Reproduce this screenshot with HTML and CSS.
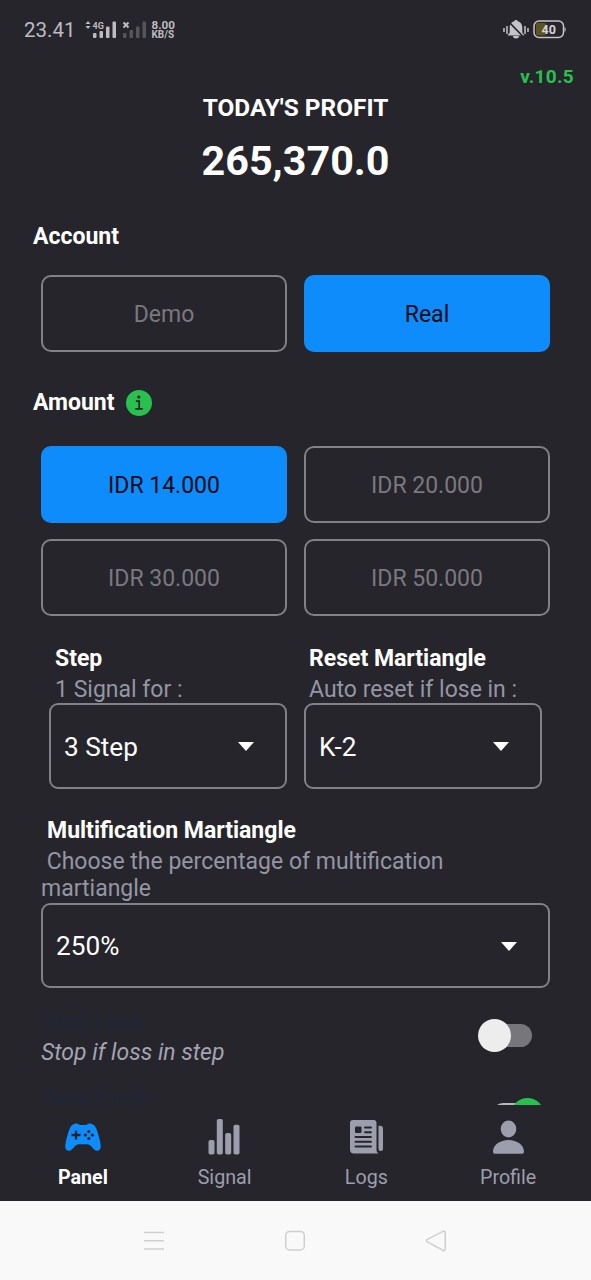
FILE: index.html
```html
<!DOCTYPE html>
<html lang="en">
<head>
<meta charset="utf-8">
<title>Panel</title>
<link rel="stylesheet" href="styles.css">
</head>
<body>
<div class="phone">
  <header class="status">
    <span class="clock">23.41</span>
    <svg class="signals" width="66" height="20" viewBox="0 0 66 20" fill="#bdbcc1">
      <path d="M2.500 4l2.500-3 2.500 3zM2.500 6h5l-2.500 3z" transform="translate(-1 0)"/>
      <g><rect x="9" y="13" width="3.500" height="5" rx="1"/><rect x="15.500" y="11" width="3.500" height="7" rx="1"/><rect x="22" y="6.500" width="3.500" height="11.500" rx="1"/><rect x="28.500" y="1.500" width="3.500" height="16.500" rx="1"/></g>
      <text x="8.500" y="8.500" class="net">4G</text>
      <path d="M39.500 2.500l5 5M44.500 2.500l-5 5" stroke="#bdbcc1" stroke-width="2"/>
      <g fill="#56555b"><rect x="39" y="13" width="3.500" height="5" rx="1"/><rect x="45.500" y="10" width="3.500" height="8" rx="1"/><rect x="52" y="6.500" width="3.500" height="11.500" rx="1"/><rect x="58.500" y="1.500" width="3.500" height="16.500" rx="1"/></g>
    </svg>
    <span class="speed"><span>8.00</span><span class="unit">KB/S</span></span>
    <svg class="mute" width="26" height="22" viewBox="0 0 26 22" fill="#c4c3c7">
      <path d="M13 1c.9 0 1.500.5 1.700 1.200 3 .7 4.600 3 4.600 6.300v5l2.200 3H4.500l2.200-3v-5c0-3.300 1.600-5.600 4.600-6.300.2-.7.800-1.200 1.700-1.200zM10 17h6a3 2.500 0 0 1-6 0z"/>
      <path d="M1 9v4M4 7v8M22 7v8M25 9v4" stroke="#c4c3c7" stroke-width="1.500"/>
      <path d="M5.500 2.500l15.500 16" stroke="#26252b" stroke-width="1.700"/>
    </svg>
    <svg class="battery" width="34" height="20" viewBox="0 0 34 20">
      <rect x="3" y="3" width="10" height="12.500" rx="2" fill="#5d5420"/>
      <rect x="1" y="1" width="29.500" height="16.500" rx="5" fill="none" stroke="#c4c3c7" stroke-width="1.500"/>
      <path d="M31.500 7c1.700.8 1.700 4 0 5z" fill="#c4c3c7"/>
      <text x="15.700" y="13.700" text-anchor="middle" class="level">40</text>
    </svg>
  </header>

  <main class="panel">
    <div class="version">v.10.5</div>
    <h1 class="title">TODAY'S PROFIT</h1>
    <div class="profit">265,370.0</div>

    <h2 class="label account">Account</h2>
    <div class="options">
      <button class="option">Demo</button>
      <button class="option on">Real</button>
    </div>

    <h2 class="label amount">Amount
      <svg class="info" width="26" height="26" viewBox="0 0 26 26">
        <circle cx="13" cy="13" r="13" fill="#28c150"/>
        <circle cx="12.800" cy="7" r="1.600" fill="#26252b"/>
        <path d="M9.800 11.200h3.400v7.500M9.300 18.800h7.500" fill="none" stroke="#26252b" stroke-width="1.800"/>
      </svg>
    </h2>
    <div class="options amounts">
      <button class="option on">IDR 14.000</button>
      <button class="option">IDR 20.000</button>
      <button class="option">IDR 30.000</button>
      <button class="option">IDR 50.000</button>
    </div>

    <div class="selects">
      <section>
        <h2 class="label">Step</h2>
        <p class="hint">1 Signal for :</p>
        <div class="select"><span>3 Step</span><i class="caret"></i></div>
      </section>
      <section>
        <h2 class="label">Reset Martiangle</h2>
        <p class="hint">Auto reset if lose in :</p>
        <div class="select"><span>K-2</span><i class="caret"></i></div>
      </section>
    </div>

    <section class="multi">
      <h2 class="label">Multification Martiangle</h2>
      <p class="hint">&nbsp;Choose the percentage of multification martiangle</p>
      <div class="select"><span>250%</span><i class="caret"></i></div>
    </section>

    <div class="rule">
      <div><h2 class="ghost">Stop Loss</h2><p class="desc">Stop if loss in step</p></div>
      <span class="switch"><i class="thumb"></i></span>
    </div>
    <div class="rule">
      <div><h2 class="ghost">Take Profit</h2></div>
      <span class="switch checked"><i class="thumb"></i></span>
    </div>
  </main>

  <nav class="tabs">
    <a class="tab active">
      <svg width="36" height="36" viewBox="0 0 36 36">
        <path fill="#0e8cfb" d="M8.500 5.200C10 4.500 11.800 4.300 13 5c1.200.8 2 1.100 3.200 1.100h3.600c1.200 0 2-.3 3.200-1.100 1.200-.7 3-.5 4.500.2 2 .9 3.200 2.500 4.200 5.300 1.800 5 3.500 11.500 4 15.500.4 3.300-.6 5.400-2.800 5.700-2.600.4-4.500-1.500-6.300-3.900-1.400-1.800-2.500-2.600-4.600-2.600h-8c-2.100 0-3.200.8-4.600 2.600-1.800 2.400-3.700 4.300-6.300 3.900C.9 31.400-.1 29.300.3 26c.5-4 2.200-10.500 4-15.500 1-2.800 2.200-4.400 4.200-5.300z"/>
        <path d="M11 11.500v9M6.500 16h9" stroke="#26252b" stroke-width="2.300"/>
        <g fill="#26252b"><circle cx="23.800" cy="12.500" r="1.600"/><circle cx="23.800" cy="19.500" r="1.600"/><circle cx="20.300" cy="16" r="1.600"/><circle cx="27.300" cy="16" r="1.600"/></g>
      </svg>
      <span>Panel</span>
    </a>
    <a class="tab">
      <svg width="36" height="36" viewBox="0 0 36 36" fill="#9c9eae"><rect x="1.500" y="21" width="6" height="14.500" rx="1.800"/><rect x="9.800" y="0" width="6" height="35.500" rx="1.800"/><rect x="18.200" y="14" width="6" height="21.500" rx="1.800"/><rect x="26.500" y="5.700" width="6" height="29.800" rx="1.800"/></svg>
      <span>Signal</span>
    </a>
    <a class="tab">
      <svg width="36" height="36" viewBox="0 0 36 36" fill="#9c9eae">
        <path d="M5 1h20.500a3 3 0 0 1 3 3v27c0 1.400.8 2.500 2 3.500H6a4 4 0 0 1-4-4V4a3 3 0 0 1 3-3z"/>
        <path d="M30.500 6.700h1.500a3 3 0 0 1 3 3v20a2.200 2.200 0 0 1-4.500 0z"/>
        <rect x="7" y="7.500" width="6.500" height="6.500" rx="1" fill="#26252b"/>
        <path d="M17 8.500h6M17 13.300h6M7.500 18h15.500M7.500 22.700h15.500M7.500 27.500h15.500" stroke="#26252b" stroke-width="1.900" stroke-linecap="round"/>
      </svg>
      <span>Logs</span>
    </a>
    <a class="tab">
      <svg width="36" height="36" viewBox="0 0 36 36" fill="#9c9eae"><ellipse cx="18.500" cy="10" rx="7.800" ry="8.500"/><path d="M18.500 21c8.500 0 15.500 5 15.500 11.500 0 1.500-.8 2.300-2.300 2.300H5.300c-1.500 0-2.300-.8-2.300-2.300C3 26 10 21 18.500 21z"/></svg>
      <span>Profile</span>
    </a>
  </nav>

  <footer class="system">
    <svg width="22" height="22" viewBox="0 0 22 22"><path d="M1 2.500h20M1 10.700h20M1 19h20"/></svg>
    <svg width="22" height="22" viewBox="0 0 22 22"><rect x="1.700" y="1.400" width="18.600" height="18.600" rx="4"/></svg>
    <svg width="22" height="22" viewBox="0 0 22 22"><path d="M18.500 1.200L2.300 9.400q-1.800 1.200 0 2.400l16.200 8.700q1.700.6 1.700-1.400V2.500q0-1.900-1.700-1.300z"/></svg>
  </footer>
</div>
</body>
</html>
```

FILE: styles.css
```css
* { box-sizing: border-box; margin: 0; padding: 0; }
body { font-family: Roboto, sans-serif; background: #26252b; color: #fff; }
.phone { width: 591px; height: 1280px; display: flex; flex-direction: column; overflow: hidden; }

.status { flex: none; height: 60px; padding: 0 24px; display: flex; align-items: center; color: #bdbcc1; }
.clock { font-size: 20.5px; line-height: 24px; }
.signals { margin: 0 0 0 8px; }
.net { font: 700 9px Roboto, sans-serif; }
.speed { display: flex; flex-direction: column; width: 26px; margin-left: 2px; font-size: 11.7px; line-height: 9.5px; font-weight: 700; }
.unit { font-size: 10px; }
.mute { margin-left: auto; }
.battery { margin: 0 0 0 4px; }
.level { font: 700 12.5px Roboto, sans-serif; fill: #d5d4d6; }

.panel { flex: none; height: 1045px; padding: 5px 41px 0; overflow: hidden; }
.version { height: 24px; margin-right: -24px; text-align: right; font-size: 19px; line-height: 24px; font-weight: 700; letter-spacing: .3px; color: #28c150; }
.title { margin-top: 4px; text-align: center; font-size: 24.4px; line-height: 29px; font-weight: 700; }
.profit { margin-top: 15px; text-align: center; font-size: 41.3px; line-height: 49px; height: 48px; font-weight: 700; }

.label { font-size: 23px; line-height: 27px; font-weight: 700; }
.account { margin: 38px 0 25px -8px; }
.amount { display: flex; gap: 11px; margin: 37px 0 30px -8px; }
.info { margin-top: 1px; }

.options { display: grid; grid-template-columns: 246px 246px; gap: 17px; }
.amounts { row-gap: 16px; }
.option { height: 77px; padding-top: 2px; border: 2px solid #818187; border-radius: 10px; background: none; font: 400 23px Roboto, sans-serif; color: #79797f; }
.option.on { background: #0e8cfb; border-color: #0e8cfb; color: #0a0b12; }

.selects { display: grid; grid-template-columns: 238px 238px; gap: 17px; margin: 29px 0 0 8px; }
.selects .label, .selects .hint { padding-left: 6px; }
.selects section + section .label, .selects section + section .hint { padding-left: 5px; }
.hint { margin-top: 4px; font-size: 23px; line-height: 27px; color: #9496a5; }
.select { display: flex; align-items: center; justify-content: space-between; height: 86px; padding: 1px 31px 0 13px; border: 2px solid #818187; border-radius: 9px; font-size: 26.2px; }
.caret { border: 8px solid transparent; border-top: 9px solid #fff; border-bottom: 0; }
.multi { margin-top: 28px; }
.multi .label { padding-left: 6px; }
.multi .select { height: 85px; margin-top: 1px; }

.rule { display: flex; justify-content: space-between; align-items: flex-start; height: 78px; margin-top: 20px; }
.rule + .rule { margin-top: 0; }
.ghost { font-size: 23px; line-height: 27px; font-weight: 700; color: #232536; }
.desc { margin-top: 4px; font-size: 23px; line-height: 27px; font-style: italic; color: #a3a4b1; }
.switch { display: flex; align-items: center; width: 46px; height: 23px; margin: 16px 18px 0 0; border-radius: 12px; background: #77767a; }
.thumb { flex: none; width: 33px; height: 33px; margin-left: -8px; border-radius: 50%; background: #ededed; }
.checked { justify-content: flex-end; width: 50px; margin: 17px 8px 0 0; background: #b9b8bd; }
.checked .thumb { background: #28c150; margin-right: -2px; }

.tabs { flex: none; height: 96px; padding: 14px 12px 0; display: grid; grid-template-columns: repeat(4, 1fr); background: #26252b; }
.tab { display: flex; flex-direction: column; align-items: center; gap: 11px; font-size: 19.7px; line-height: 23px; color: #9c9eae; }
.active { font-weight: 700; color: #fff; }

.system { flex: none; height: 79px; padding: 0 144px 0 143px; display: flex; justify-content: space-between; align-items: center; background: #f9f9f9; }
.system svg { fill: none; stroke: #cfcfcf; stroke-width: 1.5; }
```
